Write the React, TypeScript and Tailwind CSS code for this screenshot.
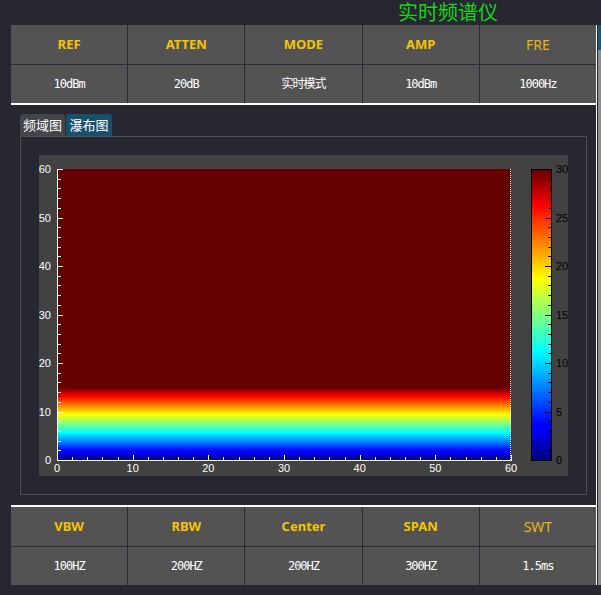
import React from "react";

const topRow = [
  { label: "REF", value: "10dBm" },
  { label: "ATTEN", value: "20dB" },
  { label: "MODE", value: "实时模式" },
  { label: "AMP", value: "10dBm" },
  { label: "FRE", value: "1000Hz", light: true },
];

const bottomRow = [
  { label: "VBW", value: "100HZ" },
  { label: "RBW", value: "200HZ" },
  { label: "Center", value: "200HZ" },
  { label: "SPAN", value: "300HZ" },
  { label: "SWT", value: "1.5ms", light: true },
];

// jet colormap stops (fraction, colour)
const jet: [number, string][] = [
  [0, "#000080"],
  [0.11, "#0000ff"],
  [0.125, "#0000ff"],
  [0.375, "#00ffff"],
  [0.5, "#80ff80"],
  [0.625, "#ffff00"],
  [0.875, "#ff0000"],
  [1, "#640000"],
];

type Cell = { label: string; value: string; light?: boolean };

function ParamTable({ cells }: { cells: Cell[] }) {
  return (
    <div className="grid grid-cols-5 gap-px bg-[#2c2c38]">
      {cells.map((c) => (
        <div
          key={c.label}
          className={
            c.light
              ? "h-[39px] bg-[#535353] flex items-center justify-center text-[14px] text-[#e8b418] font-['Noto_Sans',sans-serif]"
              : "h-[39px] bg-[#535353] flex items-center justify-center text-[13px] font-bold text-[#f5c400] font-['Noto_Sans',sans-serif]"
          }
        >
          {c.label}
        </div>
      ))}
      {cells.map((c) => (
        <div
          key={c.label + "v"}
          className="h-[38px] bg-[#535353] flex items-center justify-center text-white text-[12px] tracking-[-1px] font-['DejaVu_Sans_Mono','Noto_Sans_CJK_SC',monospace]"
        >
          {c.value}
        </div>
      ))}
    </div>
  );
}

function Chart() {
  const hx = 18;
  const hy = 14;
  const hw = 454;
  const hh = 291;
  const by = hy + hh;
  const cx = 492;
  const cw = 20;

  const yTicks = Array.from({ length: 31 }, (_, i) => i * 2);
  const cTicks = Array.from({ length: 31 }, (_, i) => i);

  return (
    <svg width={529} height={321} className="block">
      <defs>
        <linearGradient id="heat" x1="0" y1="1" x2="0" y2="0">
          {jet.map(([f, col]) => (
            <stop key={f} offset={f * 0.25} stopColor={col} />
          ))}
          <stop offset={1} stopColor="#640000" />
        </linearGradient>
        <linearGradient id="bar" x1="0" y1="1" x2="0" y2="0">
          {jet.map(([f, col]) => (
            <stop key={f} offset={f} stopColor={col} />
          ))}
        </linearGradient>
      </defs>

      <rect x={hx} y={hy} width={hw} height={hh} fill="url(#heat)" />

      {/* axes */}
      <line x1={hx + 0.5} y1={hy} x2={hx + 0.5} y2={by + 1} stroke="#fff" />
      <line x1={hx} y1={by + 0.5} x2={hx + hw} y2={by + 0.5} stroke="#fff" />
      <line
        x1={hx + hw - 0.5}
        y1={hy}
        x2={hx + hw - 0.5}
        y2={by}
        stroke="#fff"
        strokeDasharray="1 1"
      />

      {yTicks.map((v) => {
        const y = Math.round(by - (v * hh) / 60) + 0.5;
        const len = v % 10 === 0 ? 5 : 3;
        return <line key={"y" + v} x1={hx} y1={y} x2={hx + len + 1} y2={y} stroke="#fff" />;
      })}
      {yTicks.map((v) => {
        const x = Math.round(hx + (v * hw) / 60) + 0.5;
        const len = v % 10 === 0 ? 5 : 3;
        return <line key={"x" + v} x1={x} y1={by + 1} x2={x} y2={by - len} stroke="#fff" />;
      })}

      {[0, 10, 20, 30, 40, 50, 60].map((v) => (
        <text
          key={"yl" + v}
          x={12}
          y={by - (v * hh) / 60 + 4}
          textAnchor="end"
          fill="#fff"
          fontSize={11}
          fontFamily="Liberation Sans, sans-serif"
        >
          {v}
        </text>
      ))}
      {[0, 10, 20, 30, 40, 50, 60].map((v) => (
        <text
          key={"xl" + v}
          x={hx + (v * hw) / 60}
          y={by + 12}
          textAnchor="middle"
          fill="#fff"
          fontSize={11}
          fontFamily="Liberation Sans, sans-serif"
        >
          {v}
        </text>
      ))}

      {/* colour bar */}
      <rect x={cx + 0.5} y={hy + 0.5} width={cw} height={hh} fill="url(#bar)" stroke="#000" />
      {cTicks.map((v) => {
        const y = Math.round(by - (v * hh) / 30) + 0.5;
        const len = v % 5 === 0 ? 6 : 3;
        return (
          <line key={"c" + v} x1={cx + cw} y1={y} x2={cx + cw - len} y2={y} stroke="#000" />
        );
      })}
      {[0, 5, 10, 15, 20, 25, 30].map((v) => (
        <text
          key={"cl" + v}
          x={cx + cw + 5}
          y={by - (v * hh) / 30 + 4}
          fill="#000"
          fontSize={11}
          fontFamily="Liberation Sans, sans-serif"
        >
          {v}
        </text>
      ))}
    </svg>
  );
}

export default function App() {
  return (
    <div className="w-[601px] h-[595px] bg-[#262730] overflow-hidden flex flex-col">
      {/* title */}
      <div className="h-[25px] pl-[398px] text-[20px] leading-[24px] text-[#16d516] font-['Noto_Sans_CJK_SC',sans-serif]">
        实时频谱仪
      </div>

      <div className="flex h-[560px]">
        {/* content */}
        <div className="w-[596px] pl-[11px] flex flex-col">
          <ParamTable cells={topRow} />
          <div className="h-[2px] bg-white" />

          {/* tabs */}
          <div className="mt-[9px] ml-[9px] flex gap-px h-[22px]">
            <div className="w-[45px] rounded-t-[3px] bg-[#434548] text-white text-[13px] flex items-center justify-center font-['Noto_Sans_CJK_SC',sans-serif]">
              频域图
            </div>
            <div className="w-[46px] rounded-t-[3px] bg-[#17506e] text-white text-[13px] flex items-center justify-center font-['Noto_Sans_CJK_SC',sans-serif]">
              瀑布图
            </div>
          </div>

          {/* tab pane */}
          <div className="ml-[9px] w-[567px] h-[359px] border border-[#4b4c52] p-[18px]">
            <div className="bg-[#424242] w-[529px] h-[321px]">
              <Chart />
            </div>
          </div>

          <div className="mt-[10px] h-[2px] bg-white" />
          <ParamTable cells={bottomRow} />
        </div>

        {/* right edge + scrollbar */}
        <div className="w-px h-[560px] bg-white" />
        <div className="w-px" />
        <div className="w-[3px] flex flex-col">
          <div className="h-[25px] bg-[#1b5676]" />
          <div className="flex-1 bg-[#8c8c8c]" />
        </div>
      </div>
    </div>
  );
}
